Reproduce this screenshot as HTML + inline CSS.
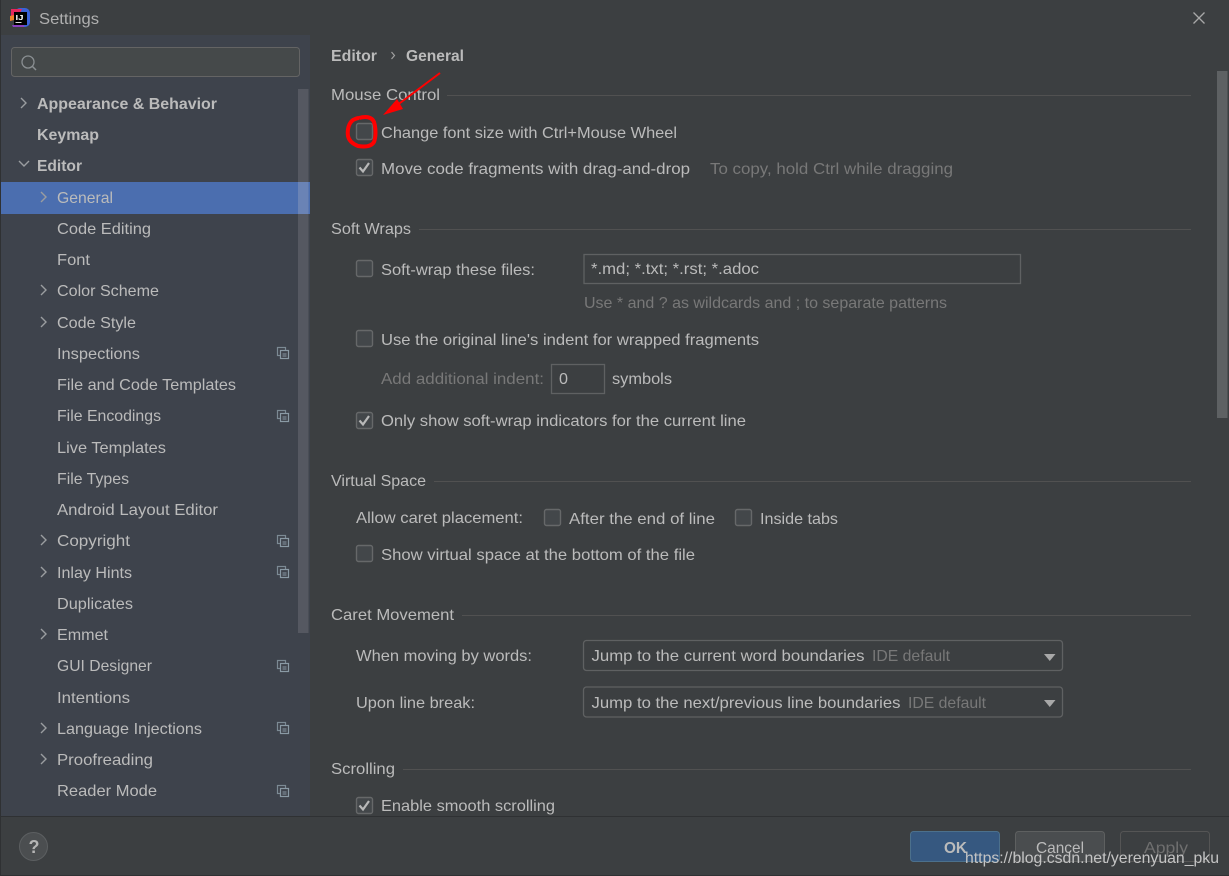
<!DOCTYPE html>
<html><head><meta charset="utf-8"><title>Settings</title>
<style>
html,body{margin:0;padding:0;background:#3c3f41;width:1229px;height:876px;overflow:hidden}
svg{display:block}
text{font-family:"Liberation Sans",sans-serif;font-size:16px;fill:#bbb}
.b{font-weight:bold}
.g{fill:#787878}
.cb{fill:#43474a;stroke:#666869;stroke-width:1.4}
.ln{stroke:#515151;stroke-width:1}
.fld{fill:#3c3f41;stroke:#5f6162;stroke-width:1.3}
.ch{fill:none;stroke:#9a9da0;stroke-width:1.4}
.ck{fill:none;stroke:#b8b8b8;stroke-width:2.2}
</style></head><body>
<svg xmlns="http://www.w3.org/2000/svg" width="1229" height="876" viewBox="0 0 1229 876">
<defs>
<g id="ci"><rect x="0" y="0" width="8" height="8" fill="none" stroke="#7c8a94" stroke-width="1.200"/><rect x="3" y="3" width="8" height="8" fill="#3f434c" stroke="#8a9aa5" stroke-width="1.200"/><path d="M5 6.500h4M5 8.500h4" stroke="#8a9aa5" stroke-width="1"/></g>
<g id="cc"><path d="M-3-5L2 0L-3 5" class="ch"/></g>
<g id="cb"><rect x="0.500" y="0.500" width="16" height="16" rx="2" class="cb"/></g>
<g id="cbc"><rect x="0.500" y="0.500" width="16" height="16" rx="2" class="cb"/><path d="M3.500 8.500l3.500 4L13 4" class="ck"/></g>
</defs>
<rect width="1229" height="876" fill="#3c3f41"/>
<rect x="0" y="0" width="1" height="876" fill="#2f3133"/>
<!-- title -->
<rect x="15" y="8" width="15" height="19" rx="5" fill="#3a62d8"/>
<path d="M11 9h11l-3 6-8 3z" fill="#e8265e"/>
<path d="M10 16l4-1v5l-4 1z" fill="#f0802a"/>
<path d="M12 25h12v2H13z" fill="#8a3fc0"/>
<rect x="14" y="12" width="13" height="13" fill="#000"/>
<text x="15.500" y="20" style="font-size:7px;font-weight:bold;fill:#fff" textLength="8" lengthAdjust="spacingAndGlyphs">IJ</text>
<rect x="15.500" y="22" width="6" height="1" fill="#ddd"/>
<text x="39" y="24" textLength="60" lengthAdjust="spacingAndGlyphs" style="fill:#b0b0b0">Settings</text>
<path d="M1193.500 12.500L1204.500 23.500M1204.500 12.500L1193.500 23.500" stroke="#a8a8a8" stroke-width="1.300"/>
<!-- sidebar -->
<rect x="1" y="35" width="309" height="781" fill="#3e434c"/>
<rect x="11.500" y="47.500" width="288" height="29" rx="3" fill="#45494a" stroke="#646464"/>
<circle cx="28" cy="62" r="6" fill="none" stroke="#8a8f92" stroke-width="1.300"/>
<path d="M32.500 66.500L36 70" stroke="#8a8f92" stroke-width="1.500"/>
<rect x="1" y="182" width="309" height="32" fill="#4b6eaf"/>
<rect x="298" y="89" width="10.500" height="544" fill="#555861"/>
<rect x="298" y="182" width="10.500" height="32" fill="#6a83b5"/>
<g>
<use href="#cc" x="24" y="103"/>
<path d="M19 161l5 5 5-5" class="ch"/>
<use href="#cc" x="44" y="197"/>
<use href="#cc" x="44" y="290"/>
<use href="#cc" x="44" y="322"/>
<use href="#cc" x="44" y="540"/>
<use href="#cc" x="44" y="572"/>
<use href="#cc" x="44" y="634"/>
<use href="#cc" x="44" y="728"/>
<use href="#cc" x="44" y="759"/>
</g>
<text class="b" x="37" y="109" textLength="180" lengthAdjust="spacingAndGlyphs">Appearance &amp; Behavior</text>
<text class="b" x="37" y="140" textLength="62" lengthAdjust="spacingAndGlyphs">Keymap</text>
<text class="b" x="37" y="171" textLength="45" lengthAdjust="spacingAndGlyphs">Editor</text>
<text x="57" y="203" textLength="56" lengthAdjust="spacingAndGlyphs">General</text>
<text x="57" y="234" textLength="94" lengthAdjust="spacingAndGlyphs">Code Editing</text>
<text x="57" y="265" textLength="33" lengthAdjust="spacingAndGlyphs">Font</text>
<text x="57" y="296" textLength="102" lengthAdjust="spacingAndGlyphs">Color Scheme</text>
<text x="57" y="328" textLength="79" lengthAdjust="spacingAndGlyphs">Code Style</text>
<text x="57" y="359" textLength="83" lengthAdjust="spacingAndGlyphs">Inspections</text>
<text x="57" y="390" textLength="179" lengthAdjust="spacingAndGlyphs">File and Code Templates</text>
<text x="57" y="421" textLength="104" lengthAdjust="spacingAndGlyphs">File Encodings</text>
<text x="57" y="453" textLength="109" lengthAdjust="spacingAndGlyphs">Live Templates</text>
<text x="57" y="484" textLength="72" lengthAdjust="spacingAndGlyphs">File Types</text>
<text x="57" y="515" textLength="161" lengthAdjust="spacingAndGlyphs">Android Layout Editor</text>
<text x="57" y="546" textLength="73" lengthAdjust="spacingAndGlyphs">Copyright</text>
<text x="57" y="578" textLength="75" lengthAdjust="spacingAndGlyphs">Inlay Hints</text>
<text x="57" y="609" textLength="76" lengthAdjust="spacingAndGlyphs">Duplicates</text>
<text x="57" y="640" textLength="51" lengthAdjust="spacingAndGlyphs">Emmet</text>
<text x="57" y="671" textLength="95" lengthAdjust="spacingAndGlyphs">GUI Designer</text>
<text x="57" y="703" textLength="73" lengthAdjust="spacingAndGlyphs">Intentions</text>
<text x="57" y="734" textLength="145" lengthAdjust="spacingAndGlyphs">Language Injections</text>
<text x="57" y="765" textLength="96" lengthAdjust="spacingAndGlyphs">Proofreading</text>
<text x="57" y="796" textLength="100" lengthAdjust="spacingAndGlyphs">Reader Mode</text>
<use href="#ci" x="277.500" y="347.500"/>
<use href="#ci" x="277.500" y="410.500"/>
<use href="#ci" x="277.500" y="535.500"/>
<use href="#ci" x="277.500" y="566.500"/>
<use href="#ci" x="277.500" y="660.500"/>
<use href="#ci" x="277.500" y="722.500"/>
<use href="#ci" x="277.500" y="785.500"/>
<!-- right scrollbar -->
<rect x="1217" y="71" width="10.500" height="347" fill="#5e6163"/>
<!-- breadcrumb -->
<text class="b" x="331" y="61" textLength="46" lengthAdjust="spacingAndGlyphs">Editor</text>
<path d="M391.500 52l3 3.500-3 3.500" fill="none" stroke="#a0a0a0" stroke-width="1.200"/>
<text class="b" x="406" y="61" textLength="58" lengthAdjust="spacingAndGlyphs">General</text>
<!-- sections -->
<text x="331" y="100" textLength="109" lengthAdjust="spacingAndGlyphs">Mouse Control</text>
<path d="M447 95.500H1191" class="ln"/>
<use href="#cb" x="356" y="123"/>
<text x="381" y="138" textLength="296" lengthAdjust="spacingAndGlyphs">Change font size with Ctrl+Mouse Wheel</text>
<use href="#cbc" x="356" y="159"/>
<text x="381" y="174" textLength="309" lengthAdjust="spacingAndGlyphs">Move code fragments with drag-and-drop</text>
<text class="g" x="710" y="174" textLength="243" lengthAdjust="spacingAndGlyphs">To copy, hold Ctrl while dragging</text>

<text x="331" y="234" textLength="80" lengthAdjust="spacingAndGlyphs">Soft Wraps</text>
<path d="M419 229.500H1191" class="ln"/>
<use href="#cb" x="356" y="260"/>
<text x="381" y="275" textLength="154" lengthAdjust="spacingAndGlyphs">Soft-wrap these files:</text>
<rect x="584" y="254.500" width="436.500" height="29" class="fld"/>
<text x="591" y="274" textLength="168" lengthAdjust="spacingAndGlyphs">*.md; *.txt; *.rst; *.adoc</text>
<text class="g" x="584" y="308" textLength="363" lengthAdjust="spacingAndGlyphs">Use * and ? as wildcards and ; to separate patterns</text>
<use href="#cb" x="356" y="330"/>
<text x="381" y="345" textLength="378" lengthAdjust="spacingAndGlyphs">Use the original line's indent for wrapped fragments</text>
<text class="g" x="381" y="384" textLength="163" lengthAdjust="spacingAndGlyphs">Add additional indent:</text>
<rect x="551.500" y="364.500" width="53" height="29" class="fld"/>
<text x="559" y="384" textLength="9" lengthAdjust="spacingAndGlyphs">0</text>
<text x="612" y="384" textLength="60" lengthAdjust="spacingAndGlyphs">symbols</text>
<use href="#cbc" x="356" y="412"/>
<text x="381" y="426" textLength="365" lengthAdjust="spacingAndGlyphs">Only show soft-wrap indicators for the current line</text>

<text x="331" y="486" textLength="95" lengthAdjust="spacingAndGlyphs">Virtual Space</text>
<path d="M434 481.500H1191" class="ln"/>
<text x="356" y="523" textLength="167" lengthAdjust="spacingAndGlyphs">Allow caret placement:</text>
<use href="#cb" x="544" y="509"/>
<text x="569" y="524" textLength="146" lengthAdjust="spacingAndGlyphs">After the end of line</text>
<use href="#cb" x="735" y="509"/>
<text x="760" y="524" textLength="78" lengthAdjust="spacingAndGlyphs">Inside tabs</text>
<use href="#cb" x="356" y="545"/>
<text x="381" y="560" textLength="314" lengthAdjust="spacingAndGlyphs">Show virtual space at the bottom of the file</text>

<text x="331" y="620" textLength="123" lengthAdjust="spacingAndGlyphs">Caret Movement</text>
<path d="M462 615.500H1191" class="ln"/>
<text x="356" y="661" textLength="176" lengthAdjust="spacingAndGlyphs">When moving by words:</text>
<rect x="583.500" y="640.500" width="479" height="30" rx="3" class="fld"/>
<text x="591.500" y="661" textLength="273" lengthAdjust="spacingAndGlyphs">Jump to the current word boundaries</text>
<text class="g" x="872" y="661" textLength="78" lengthAdjust="spacingAndGlyphs">IDE default</text>
<path d="M1044 654h11.500l-5.750 7z" fill="#a8a8a8"/>
<text x="356" y="708" textLength="119" lengthAdjust="spacingAndGlyphs">Upon line break:</text>
<rect x="583.500" y="687" width="479" height="30" rx="3" class="fld"/>
<text x="591.500" y="708" textLength="309" lengthAdjust="spacingAndGlyphs">Jump to the next/previous line boundaries</text>
<text class="g" x="908" y="708" textLength="78" lengthAdjust="spacingAndGlyphs">IDE default</text>
<path d="M1044 700h11.500l-5.750 7z" fill="#a8a8a8"/>

<text x="331" y="774" textLength="64" lengthAdjust="spacingAndGlyphs">Scrolling</text>
<path d="M403 769.500H1191" class="ln"/>
<use href="#cbc" x="356" y="797"/>
<text x="381" y="811" textLength="174" lengthAdjust="spacingAndGlyphs">Enable smooth scrolling</text>

<!-- bottom bar -->
<rect x="1" y="816" width="1228" height="60" fill="#3c3f41"/>
<path d="M0 816.500H1229" stroke="#2f3133"/>
<path d="M0 875.500H1229" stroke="#2f3133"/>
<circle cx="33.500" cy="846.500" r="14" fill="#4b4e50" stroke="#5c5f61"/>
<text class="b" x="28.500" y="853" style="font-size:18px;fill:#b5b5b5">?</text>
<rect x="910.500" y="831.500" width="89" height="30" rx="3" fill="#365880" stroke="#4c708c"/>
<text class="b" x="944" y="853" textLength="23" lengthAdjust="spacingAndGlyphs">OK</text>
<rect x="1015.500" y="831.500" width="89" height="30" rx="3" fill="#4a4d4f" stroke="#5e6060"/>
<text x="1036" y="853" textLength="48" lengthAdjust="spacingAndGlyphs">Cancel</text>
<rect x="1120.500" y="831.500" width="89" height="30" rx="3" fill="#3c3f41" stroke="#555"/>
<text x="1144" y="853" textLength="44" lengthAdjust="spacingAndGlyphs" style="fill:#6f6f6f">Apply</text>
<text x="965" y="863" textLength="254" lengthAdjust="spacingAndGlyphs" style="fill:#c4c4c4;font-size:16px">https://blog.csdn.net/yerenyuan_pku</text>

<!-- red annotation -->
<path d="M359 118c7-2 13-1 15 4c2 6 2 15 0 20c-3 5-10 5-16 4c-5-2-9-5-10-10c-1-7 1-13 5-16c2-1 4-2 6-2" fill="none" stroke="#ff0000" stroke-width="4"/>
<path d="M440 73L396 106" stroke="#ff0000" stroke-width="2" fill="none"/>
<path d="M383 115L397 99L403 109z" fill="#ff0000"/>
</svg>
</body></html>
